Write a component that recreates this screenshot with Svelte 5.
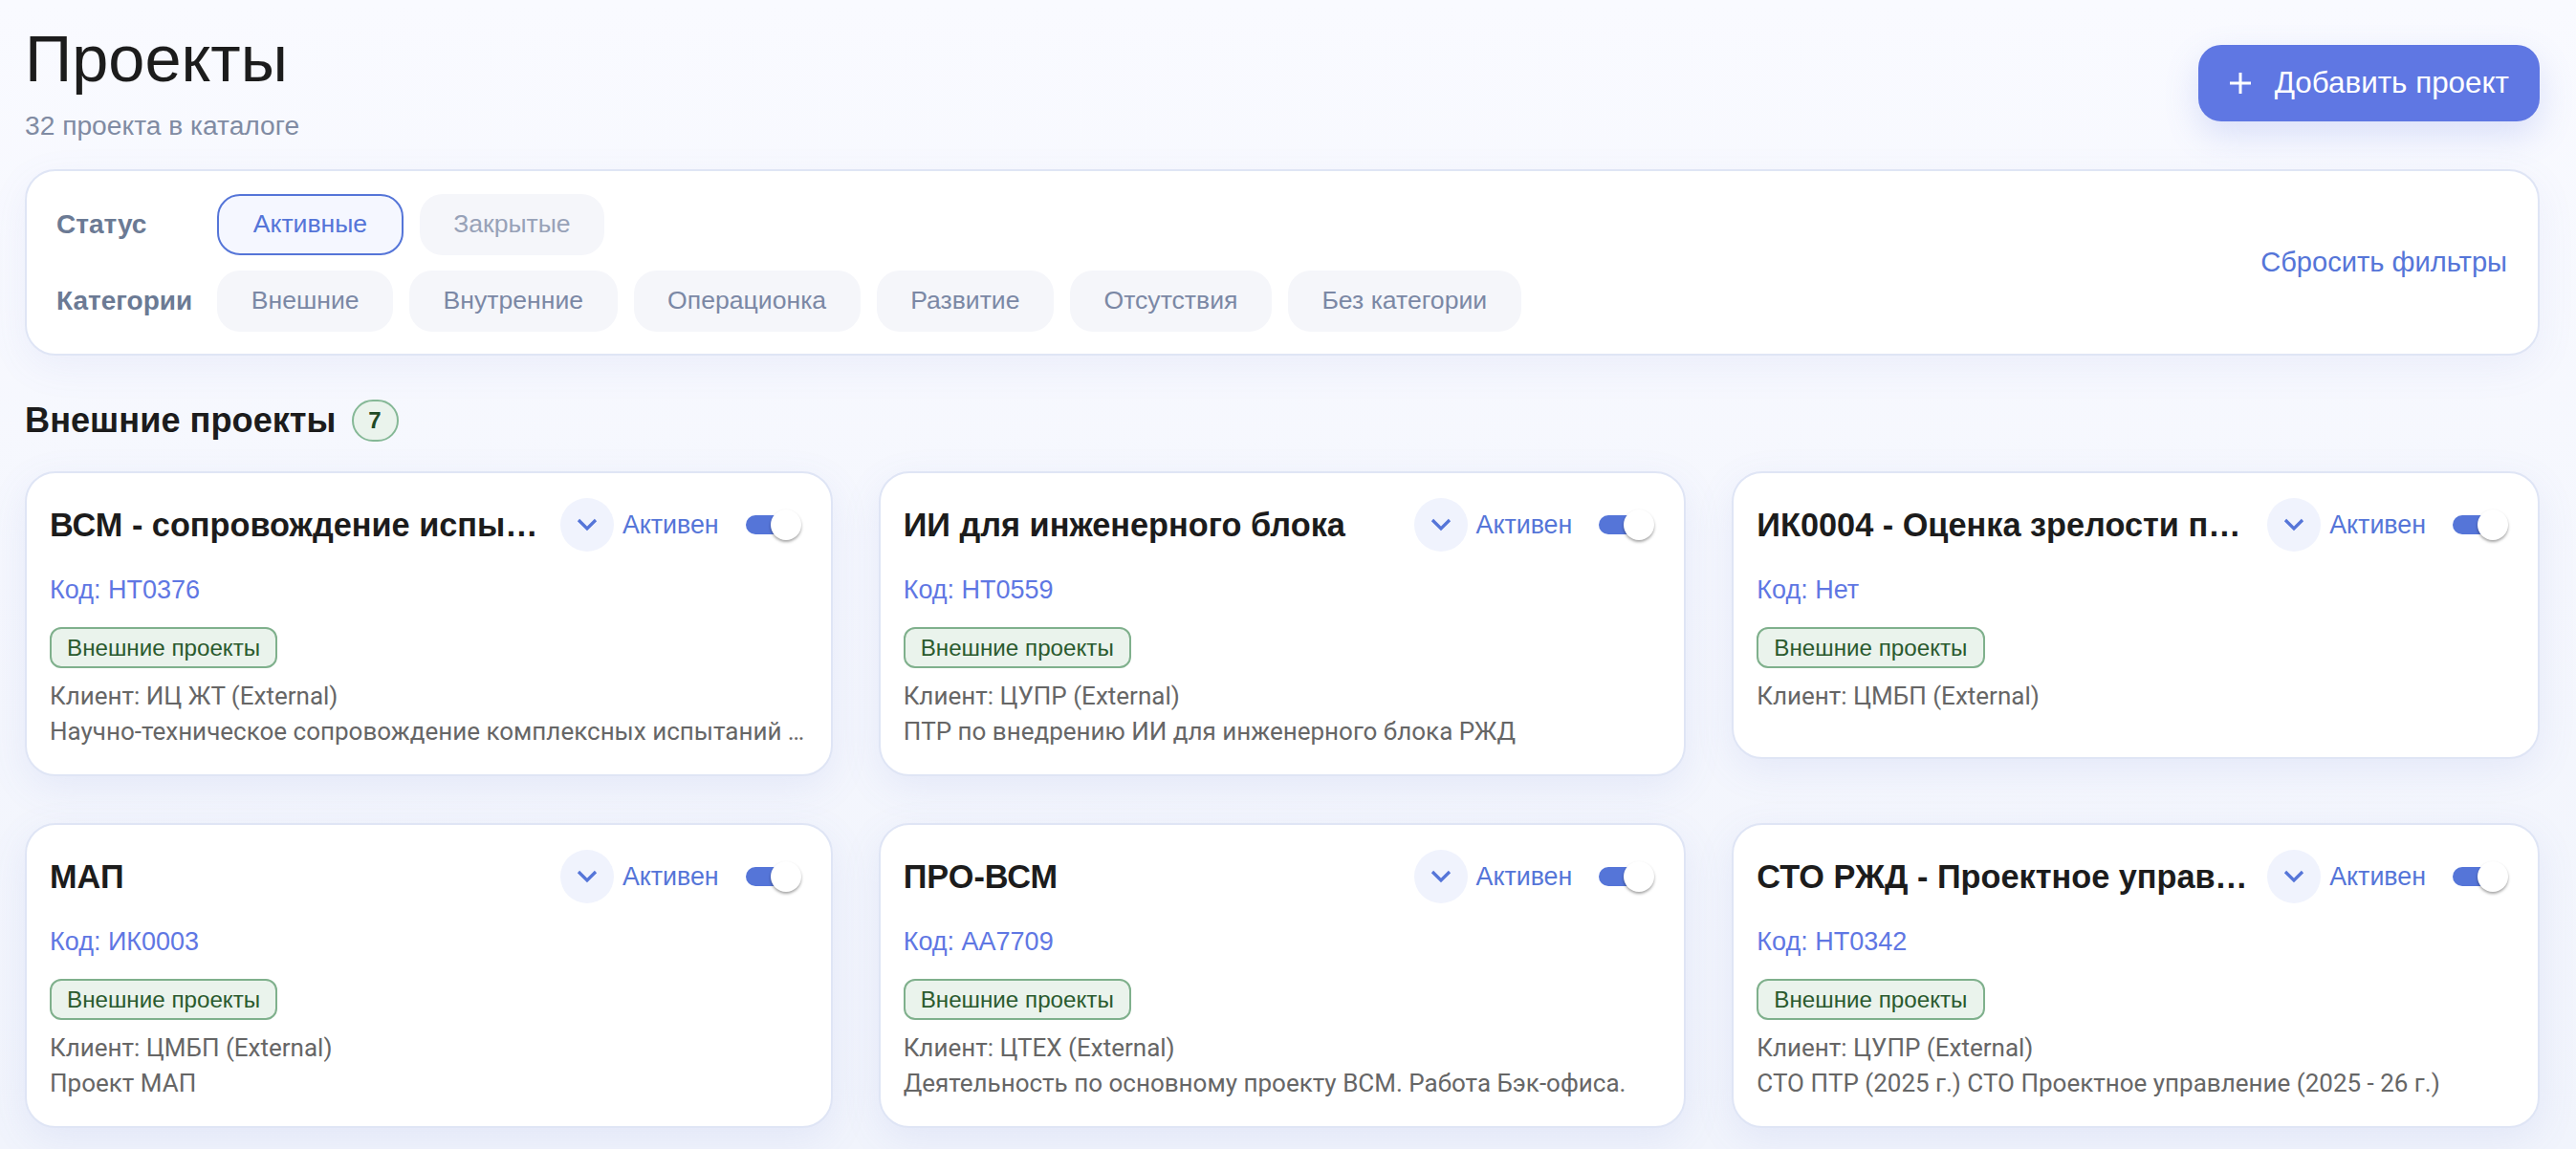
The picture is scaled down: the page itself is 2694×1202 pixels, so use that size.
<script>
  const statuses = [
    { label: 'Активные', active: true },
    { label: 'Закрытые', muted: true }
  ];
  const categories = ['Внешние', 'Внутренние', 'Операционка', 'Развитие', 'Отсутствия', 'Без категории'];

  const projects = [
    { title: 'ВСМ - сопровождение испытаний', code: 'НТ0376', client: 'ИЦ ЖТ', desc: 'Научно-техническое сопровождение комплексных испытаний …' },
    { title: 'ИИ для инженерного блока', code: 'НТ0559', client: 'ЦУПР', desc: 'ПТР по внедрению ИИ для инженерного блока РЖД' },
    { title: 'ИК0004 - Оценка зрелости проектного управления', code: 'Нет', client: 'ЦМБП', desc: '' },
    { title: 'МАП', code: 'ИК0003', client: 'ЦМБП', desc: 'Проект МАП' },
    { title: 'ПРО-ВСМ', code: 'АА7709', client: 'ЦТЕХ', desc: 'Деятельность по основному проекту ВСМ. Работа Бэк-офиса.' },
    { title: 'СТО РЖД - Проектное управление', code: 'НТ0342', client: 'ЦУПР', desc: 'СТО ПТР (2025 г.) СТО Проектное управление (2025 - 26 г.)' }
  ];
</script>

<div class="page">
  <header class="top">
    <div>
      <h1>Проекты</h1>
      <p class="count">32 проекта в каталоге</p>
    </div>
    <button type="button" class="add">
      <svg width="24" height="24" viewBox="0 0 24 24" aria-hidden="true">
        <path d="M12 1v22M1 12h22" stroke="currentColor" stroke-width="3" fill="none" />
      </svg>
      Добавить проект
    </button>
  </header>

  <section class="filters">
    <div class="filter-grid">
      <span class="filter-label">Статус</span>
      <div class="chips">
        {#each statuses as s}
          <button type="button" class="chip" class:chip--active={s.active} class:chip--muted={s.muted}>{s.label}</button>
        {/each}
      </div>
      <span class="filter-label">Категории</span>
      <div class="chips">
        {#each categories as c}
          <button type="button" class="chip">{c}</button>
        {/each}
      </div>
    </div>
    <button type="button" class="reset">Сбросить фильтры</button>
  </section>

  <div class="section-head">
    <h2>Внешние проекты</h2>
    <span class="section-count">7</span>
  </div>

  <div class="grid">
    {#each projects as p}
      <article class="card">
        <div class="card-head">
          <h3>{p.title}</h3>
          <button type="button" class="expand" aria-label="Развернуть">
            <svg width="24" height="16" viewBox="0 0 24 16" aria-hidden="true">
              <path d="M3 3l9 9 9-9" stroke="currentColor" stroke-width="3.2" fill="none" />
            </svg>
          </button>
          <span class="state">Активен</span>
          <span class="switch"><span class="knob"></span></span>
        </div>
        <div class="code">Код: {p.code}</div>
        <span class="tag">Внешние проекты</span>
        <div class="meta">Клиент: {p.client} (External)</div>
        {#if p.desc}
          <div class="meta desc">{p.desc}</div>
        {/if}
      </article>
    {/each}
  </div>
</div>

<style>
  :global(body) {
    margin: 0;
    background: #f6f7fd;
  }

  .page {
    box-sizing: border-box;
    height: 1202px;
    overflow: hidden;
    padding: 20px 38px 0 26px;
    font-family: 'Liberation Sans', Arial, sans-serif;
    color: #1c1c1c;
    background: linear-gradient(180deg, #f9faff 0%, #f1f4fc 100%);
  }

  button {
    font-family: inherit;
    cursor: pointer;
  }

  .top {
    display: flex;
    justify-content: space-between;
    align-items: flex-start;
    height: 157px;
  }

  h1 {
    margin: 0;
    font-size: 68.5px;
    font-weight: 400;
    line-height: 84px;
  }

  .count {
    margin: 9px 0 0;
    font-size: 28.2px;
    line-height: 36px;
    color: #808ba3;
  }

  .add {
    display: inline-flex;
    align-items: center;
    gap: 24px;
    height: 80px;
    margin-top: 27px;
    padding: 0 32px;
    border: 0;
    border-radius: 24px;
    background: #5f77e3;
    color: #fff;
    font-size: 31.4px;
    font-weight: 400;
    box-shadow: 0 14px 36px rgba(95, 119, 227, 0.2);
  }

  .filters {
    display: flex;
    align-items: center;
    justify-content: space-between;
    box-sizing: border-box;
    height: 195px;
    padding: 0 32px 0 31px;
    border: 2px solid #dfe5f5;
    border-radius: 32px;
    background: #fff;
    box-shadow: 0 12px 40px rgba(100, 120, 210, 0.08);
  }

  .filter-grid {
    display: grid;
    grid-template-columns: auto 1fr;
    align-items: center;
    gap: 16px 26px;
  }

  .filter-label {
    font-size: 28px;
    font-weight: 700;
    color: #6b7a94;
  }

  .chips {
    display: flex;
    gap: 17px;
  }

  .chip {
    height: 64px;
    padding: 0 35.5px;
    border: 0;
    border-radius: 24px;
    background: #f5f6fa;
    color: #7b88a5;
    font-size: 26.6px;
  }

  .chip--active {
    border: 2px solid #5575d8;
    background: #f5f7ff;
    color: #5575d8;
  }

  .chip--muted {
    color: #98a2b8;
  }

  .reset {
    padding: 0;
    border: 0;
    background: none;
    color: #5575d8;
    font-size: 29.1px;
  }

  .section-head {
    display: flex;
    align-items: center;
    gap: 16px;
    margin: 46px 0 31px;
    height: 44px;
  }

  h2 {
    margin: 0;
    font-size: 36.2px;
    font-weight: 700;
  }

  .section-count {
    box-sizing: border-box;
    width: 49px;
    height: 44px;
    display: flex;
    align-items: center;
    justify-content: center;
    border: 2px solid #85b896;
    border-radius: 22px;
    background: #eaf3ec;
    color: #1f4a26;
    font-size: 24px;
    font-weight: 700;
  }

  .grid {
    display: grid;
    grid-template-columns: repeat(3, minmax(0, 1fr));
    gap: 49px 48px;
    align-items: start;
  }

  .card {
    box-sizing: border-box;
    min-height: 301px;
    padding: 26px 24px 30px;
    border: 2px solid #dfe5f5;
    border-radius: 32px;
    background: #fff;
    box-shadow: 0 12px 40px rgba(100, 120, 210, 0.1);
  }

  .card-head {
    display: flex;
    align-items: center;
    height: 56px;
    margin-bottom: 24px;
  }

  h3 {
    flex: 1;
    min-width: 0;
    margin: 0 10px 0 0;
    font-size: 34.3px;
    font-weight: 700;
    white-space: nowrap;
    overflow: hidden;
    text-overflow: ellipsis;
  }

  .expand {
    flex: none;
    display: flex;
    align-items: center;
    justify-content: center;
    width: 56px;
    height: 56px;
    padding: 0;
    border: 0;
    border-radius: 50%;
    background: #f0f3fd;
    color: #5575d8;
  }

  .state {
    flex: none;
    margin: 0 28px 0 9px;
    font-size: 26.8px;
    color: #5575d8;
  }

  .switch {
    flex: none;
    position: relative;
    width: 50px;
    height: 20px;
    margin-right: 15px;
    border-radius: 10px;
    background: #5575d8;
  }

  .knob {
    position: absolute;
    top: -6px;
    right: -8px;
    width: 32px;
    height: 32px;
    border-radius: 50%;
    background: #fff;
    box-shadow: 0 2px 3px rgba(0, 0, 0, 0.35);
  }

  .code {
    font-size: 27px;
    line-height: 32px;
    color: #5f77e3;
    margin-bottom: 23px;
  }

  .tag {
    display: inline-block;
    box-sizing: border-box;
    height: 43px;
    padding: 0 16px;
    border: 2px solid #7fb08c;
    border-radius: 12px;
    background: #eaf3ec;
    color: #2a5a2e;
    font-size: 24.2px;
    line-height: 39px;
  }

  .meta {
    margin-top: 14px;
    font-family: Roboto, 'Liberation Sans', sans-serif;
    font-size: 26px;
    line-height: 30px;
    color: #666;
  }

  .desc {
    margin-top: 7px;
    white-space: nowrap;
    overflow: hidden;
  }
</style>
